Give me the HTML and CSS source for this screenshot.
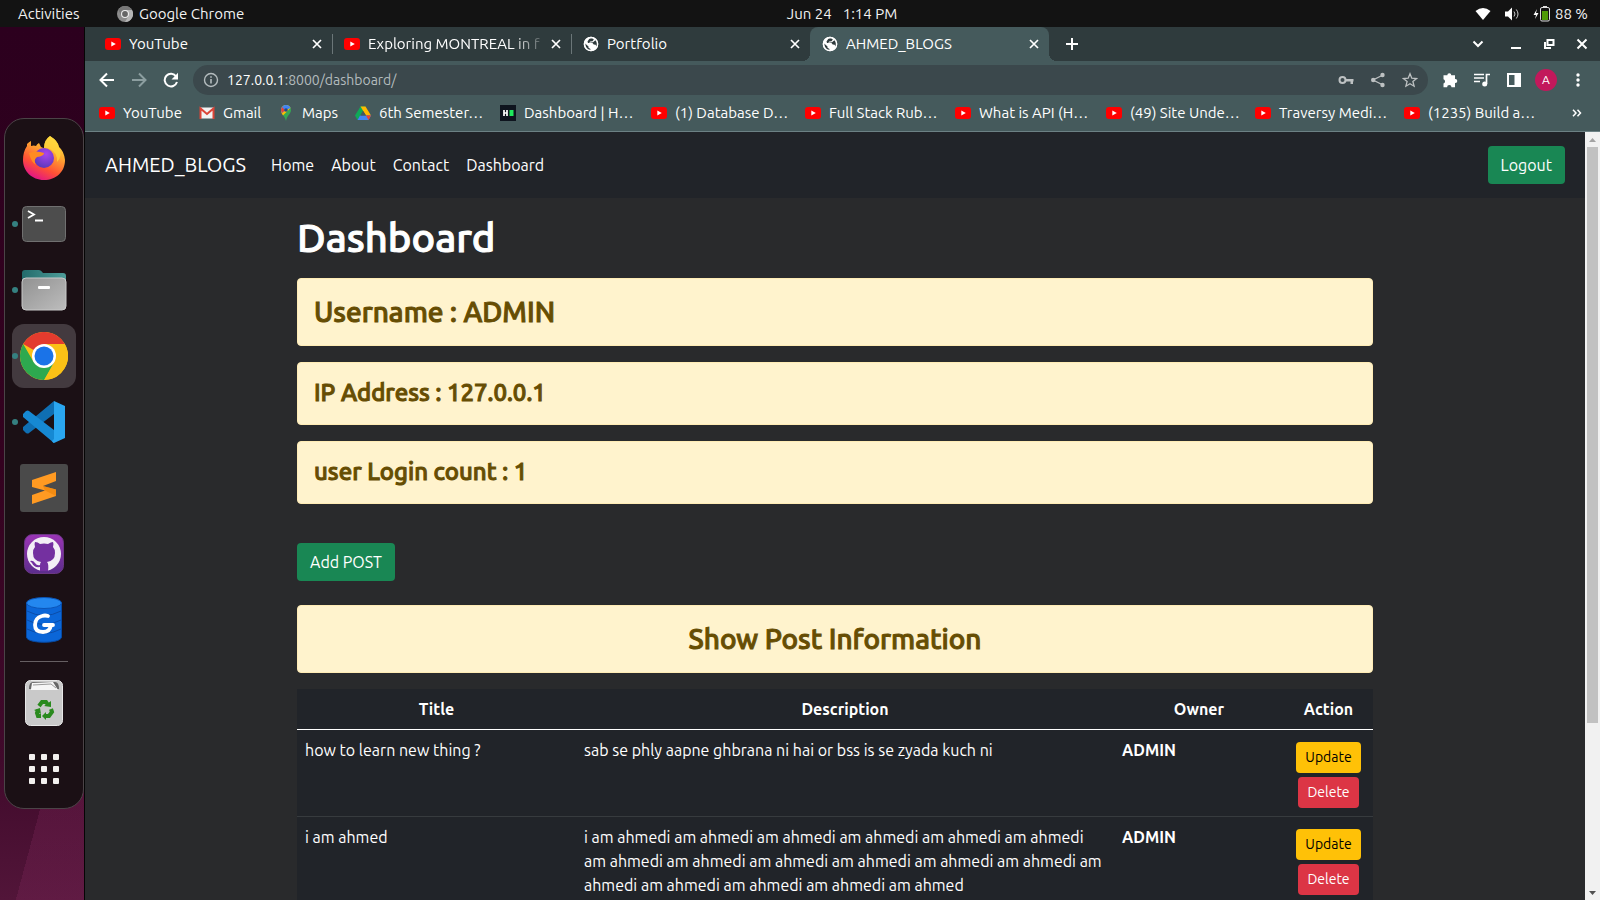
FILE: index.html
```html
<!DOCTYPE html>
<html lang="en">
<head>
<meta charset="utf-8">
<title>AHMED_BLOGS</title>
<link rel="stylesheet" href="styles.css">
</head>
<body>
<svg class="sprite" aria-hidden="true">
  <symbol id="yt" viewBox="0 0 16 16"><rect y="2" width="16" height="12" rx="3" fill="#f00"/><path d="M6.300 5.500v5L10.800 8z" fill="#fff"/></symbol>
  <symbol id="globe" viewBox="0 0 16 16"><circle cx="8" cy="8" r="7.200" fill="#fff"/><path d="M2.200 7.500 5.500 10.500v1.200l2 1.300v1.500A6.500 6.500 0 0 1 2.200 7.500zM6.500 2.500 9.500 2l1.300 1.500-1.300 1.700-2.300.3L6 7h3.500l1.200 1.500 2 .2.800 2.300-1 1.500.8-.8A7 7 0 0 0 13 4L11.500 5 10 6.300 5 7 4.500 5.500z" fill="#2f3b3d"/><circle cx="8" cy="8" r="6.600" fill="none" stroke="#fff" stroke-width="1.500"/></symbol>
  <symbol id="cross" viewBox="0 0 16 16"><path d="m4 4 8 8m0-8-8 8" stroke="#fff" stroke-width="1.700" fill="none"/></symbol>
</svg>

<header class="topbar">
  <button class="top-item activities">Activities</button>
  <div class="top-item app-menu">
    <svg width="16" height="16" viewBox="0 0 16 16"><circle cx="8" cy="8" r="8" fill="#8c8c8c"/><path d="M8 4h7A8 8 0 0 1 8 16l3.500-6z" fill="#b5b5b5"/><path d="M8 0a8 8 0 0 1 7 4H8L4.500 10 1.300 4A8 8 0 0 1 8 0z" fill="#777"/><circle cx="8" cy="8" r="4" fill="#eee"/><circle cx="8" cy="8" r="2.900" fill="#666"/></svg>
    <span>Google Chrome</span>
  </div>
  <div class="clock"><span>Jun 24</span><span>1:14 PM</span></div>
  <div class="status">
    <svg width="16" height="14" viewBox="0 0 16 14"><path d="M.5 4Q8-2 15.500 4L8 13z" fill="#fff"/></svg>
    <svg width="16" height="16" viewBox="0 0 16 16"><path d="M1 5.500h3L8 1.500v13l-4-4H1z" fill="#fff"/><path d="M10 5.500q2 2.500 0 5M12.300 3.500q3.400 4.500 0 9" stroke="#ccc" fill="none"/></svg>
    <svg class="battery" width="17" height="16" viewBox="0 0 17 16"><path d="M4 3 .5 9H3l-1 4 3.500-6H3z" fill="#fff"/><path d="M10 0h4v2h-4z" fill="#ddd"/><rect x="7.500" y="1.500" width="9" height="13.500" rx="1.500" fill="none" stroke="#ddd"/><path d="M9 5h6v9H9z" fill="#4e9a06"/></svg>
    <span>88 %</span>
  </div>
</header>

<div class="desktop">
  <aside class="side">
    <nav class="dock">
      <button class="slot" aria-label="Firefox"><svg width="44" height="46" viewBox="0 0 44 46">
        <defs><linearGradient id="ff1" x1=".8" y1="0" x2=".3" y2="1"><stop offset="0" stop-color="#fff04a"/><stop offset=".35" stop-color="#ffa930"/><stop offset=".7" stop-color="#ff5035"/><stop offset="1" stop-color="#e0118c"/></linearGradient><radialGradient id="ff2" cx=".6" cy=".3" r=".8"><stop offset="0" stop-color="#a945ee"/><stop offset="1" stop-color="#5237b5"/></radialGradient></defs>
        <path d="M28 1q8 5 9 11 5 4 6 13c0 12-9 20-21 20S1 36 1 25c0-5 1-10 4-14v-2q2-2 4-3v5q3-1 5 0 1-2 3-3l2 4q2 1 3 1 0-8 6-12z" fill="url(#ff1)"/>
        <circle cx="22" cy="23" r="10" fill="url(#ff2)"/>
        <path d="M7 18q7-3 15 0 0 3-7 4-4 3-1 8-5-3-7-12z" fill="#ff8b22"/>
        <path d="M28 1q8 5 9 11 4 9-2 15 1-9-7-13-5-2-6-1 0-8 6-12z" fill="#ffd63b" opacity=".75"/></svg></button>
      <button class="slot running" aria-label="Terminal"><svg width="44" height="36" viewBox="0 0 44 36"><rect x=".5" y=".5" width="43" height="35" rx="4" fill="#4d4d4d" stroke="#707070"/><path d="m6 5 6 3.500L6 12M13 14.500h8" stroke="#fff" stroke-width="1.800" fill="none"/></svg></button>
      <button class="slot running" aria-label="Files"><svg width="46" height="42" viewBox="0 0 46 42"><defs><linearGradient id="fg" x2="1" y2="1"><stop stop-color="#919191"/><stop offset="1" stop-color="#bdbdbd"/></linearGradient><linearGradient id="ft" x2="1"><stop stop-color="#236b6b"/><stop offset="1" stop-color="#4e9d99"/></linearGradient></defs><path d="M1 14V4q0-3 3-3h14q2 0 4 3h20q3 0 3 3v9z" fill="url(#ft)"/><rect x="1" y="9" width="44" height="32" rx="4" fill="url(#fg)" stroke="#c9c9c9"/><rect x="17" y="17" width="12" height="3" rx="1" fill="#fff"/></svg></button>
      <button class="slot running focused" aria-label="Google Chrome"><svg width="48" height="48" viewBox="0 0 48 48"><circle cx="24" cy="24" r="24" fill="#fbc116"/><path d="M24 24 3.200 12A24 24 0 0 1 44.800 12z" fill="#e33b2e"/><path d="M3.200 12 13.600 30 24 36l.5 12A24 24 0 0 1 3.200 12z" fill="#2da94f"/><path d="M34.400 30 24.500 48l-7-10L24 36z" fill="#2da94f"/><path d="M34.400 30 24 48a24 24 0 0 0 20.800-36H24z" fill="#fbc116"/><circle cx="24" cy="24" r="12" fill="#fff"/><circle cx="24" cy="24" r="9.500" fill="#1a73e8"/></svg></button>
      <button class="slot running" aria-label="Visual Studio Code"><svg width="42" height="42" viewBox="0 0 42 42"><path d="M31 0v13L6 32q-1 1-3 0l-3-3q-1-1 0-3z" fill="#0f6fb3"/><path d="M31 42V29L6 10q-1-1-3 0l-3 3q-1 1 0 3z" fill="#1689d3"/><path d="m31 0 11 5v32l-11 5q-1 0-2-2l2-2z" fill="#2aa6f0"/></svg></button>
      <button class="slot" aria-label="Sublime Text"><svg width="48" height="48" viewBox="0 0 48 48"><rect width="48" height="48" rx="3" fill="#4a4a4a"/><path d="M12 16 36 8v9l-13 5 13 3.500V32l-24 8v-9l13-4.500L12 23z" fill="#ff9a22"/><path d="m23 22 13 3.500V32l-11-5.500z" fill="#e98208" opacity=".6"/></svg></button>
      <button class="slot" aria-label="GitHub Desktop"><svg width="40" height="40" viewBox="0 0 40 40"><defs><linearGradient id="gh" x2="0" y2="1"><stop stop-color="#9b35b5"/><stop offset="1" stop-color="#5c2d8c"/></linearGradient></defs><rect x=".5" y=".5" width="39" height="39" rx="8" fill="url(#gh)" stroke="#6b3784"/><circle cx="20" cy="20" r="17" fill="#f3eff6"/><path d="M16 37v-4q-6 1-8-4l-2-2q3-1 5 2 2 3 5 2 0-2 1-3-8-1-8-9 0-4 2-6-1-3 0-5 3 0 5 2 4-1 8 0 3-2 5-2 1 2 0 5 2 2 2 6 0 8-8 9 2 2 1 9z" fill="#7430a0"/></svg></button>
      <button class="slot" aria-label="Database client"><svg width="36" height="46" viewBox="0 0 36 46"><path d="M.5 6v34c0 7 35 7 35 0V6z" fill="#0b66d8" stroke="#074aa3"/><path d="M1 14q17 9 34 0M1 23q17 9 34 0M1 32q17 9 34 0" stroke="#0b4da8" fill="none"/><ellipse cx="18" cy="6" rx="17.500" ry="5.500" fill="#2387ef" stroke="#0b55b8"/><path d="M22 19q-3-1-6 0-7 2-7 9 0 7 8 7 7 0 8-7h-7 9" stroke="#fff" stroke-width="3.800" stroke-linecap="round" stroke-linejoin="round" fill="none"/></svg></button>
      <hr class="dock-rule">
      <button class="slot" aria-label="Trash"><svg width="38" height="46" viewBox="0 0 38 46"><rect x=".5" y=".5" width="37" height="45" rx="5" fill="#c9c9c9" stroke="#e8e8e8"/><path d="M4 9q0-7 4-7h22q4 0 4 7z" fill="#666"/><path d="M6 9 7 3l21-1 5 8H6z" fill="#f6f6f6"/><path d="m8 5 18-1 5 4" stroke="#999" fill="none"/><g fill="none" stroke="#2a8a1e" stroke-width="4"><path d="m14 26 3-4h4l2 3"/><path d="m26 29 1 3-3 4h-4"/><path d="M16 36h-3l-1-3 1-3"/></g><path d="m19 26 7 1 0-6zM21 32v8l-4-4zM9 30l6-2 1 6z" fill="#2a8a1e"/></svg></button>
      <button class="slot" aria-label="Show applications"><svg width="30" height="30" viewBox="0 0 30 30" fill="#f2f0ee"><rect width="6" height="6" rx="1"/><rect x="12" width="6" height="6" rx="1"/><rect x="24" width="6" height="6" rx="1"/><rect y="12" width="6" height="6" rx="1"/><rect x="12" y="12" width="6" height="6" rx="1"/><rect x="24" y="12" width="6" height="6" rx="1"/><rect y="24" width="6" height="6" rx="1"/><rect x="12" y="24" width="6" height="6" rx="1"/><rect x="24" y="24" width="6" height="6" rx="1"/></svg></button>
    </nav>
  </aside>

  <div class="window">
    <div class="tabstrip">
      <div class="tab"><svg class="fav"><use href="#yt"/></svg><span class="tab-title">YouTube</span><button class="tab-close" aria-label="Close tab"><svg><use href="#cross"/></svg></button></div>
      <div class="tab divided"><svg class="fav"><use href="#yt"/></svg><span class="tab-title fade">Exploring MONTREAL in f</span><button class="tab-close" aria-label="Close tab"><svg><use href="#cross"/></svg></button></div>
      <div class="tab divided"><svg class="fav"><use href="#globe"/></svg><span class="tab-title">Portfolio</span><button class="tab-close" aria-label="Close tab"><svg><use href="#cross"/></svg></button></div>
      <div class="tab active"><svg class="fav"><use href="#globe"/></svg><span class="tab-title">AHMED_BLOGS</span><button class="tab-close" aria-label="Close tab"><svg><use href="#cross"/></svg></button></div>
      <button class="new-tab" aria-label="New tab"><svg width="12" height="12" viewBox="0 0 12 12"><path d="M6 0v12M0 6h12" stroke="#fff" stroke-width="2"/></svg></button>
      <div class="window-buttons">
        <button class="win-btn wide" aria-label="Search tabs"><svg width="12" height="12" viewBox="0 0 12 12"><path d="m1.500 3.500 4.500 4.500 4.500-4.500" stroke="#fff" stroke-width="2" fill="none"/></svg></button>
        <button class="win-btn" aria-label="Minimize"><svg width="12" height="12" viewBox="0 0 12 12"><path d="M1 10h10" stroke="#fff" stroke-width="2"/></svg></button>
        <button class="win-btn" aria-label="Restore"><svg width="12" height="12" viewBox="0 0 12 12"><path d="M4.500 2h6v5h-6zM2 4v6h6" stroke="#fff" stroke-width="2" fill="none"/></svg></button>
        <button class="win-btn" aria-label="Close"><svg width="12" height="12" viewBox="0 0 12 12"><path d="m1.500 1.500 9 9m0-9-9 9" stroke="#fff" stroke-width="2"/></svg></button>
      </div>
    </div>

    <div class="toolbar">
      <button class="tool" aria-label="Back"><svg viewBox="0 0 16 16"><path d="M15 8H2m6-6.500L1.500 8 8 14.500" stroke="#fff" stroke-width="2" fill="none"/></svg></button>
      <button class="tool" aria-label="Forward"><svg viewBox="0 0 16 16"><path d="M1 8h13M8 1.500 14.500 8 8 14.500" stroke="#8c9ea0" stroke-width="2" fill="none"/></svg></button>
      <button class="tool" aria-label="Reload"><svg viewBox="0 0 16 16"><path d="M13.200 4.500A6.300 6.300 0 1 0 14 10" stroke="#fff" stroke-width="2" fill="none"/><path d="M15 .8v6.700H8.500z" fill="#fff"/></svg></button>
      <div class="address">
        <svg class="info" viewBox="0 0 16 16"><circle cx="8" cy="8" r="6.500" fill="none" stroke="#b4bcbe" stroke-width="1.400"/><path d="M8 7v4.500M8 4.200v1.600" stroke="#b4bcbe" stroke-width="1.600"/></svg>
        <a class="url" href="#"><b>127.0.0.1</b>:8000/dashboard/</a>
        <button class="tool" aria-label="Passwords"><svg viewBox="0 0 16 16"><circle cx="4.500" cy="8" r="3" fill="none" stroke="#bdc1c2" stroke-width="2"/><path d="M7.500 7h8v2.500H15V12h-2.500V9.500h-5z" fill="#bdc1c2"/></svg></button>
        <button class="tool" aria-label="Share"><svg viewBox="0 0 16 16"><path d="M13 3 3 8l10 5" stroke="#bdc1c2" stroke-width="1.300" fill="none"/><g fill="#bdc1c2"><circle cx="12.500" cy="3" r="2.200"/><circle cx="3.200" cy="8" r="2.200"/><circle cx="12.500" cy="13" r="2.200"/></g></svg></button>
        <button class="tool" aria-label="Bookmark"><svg viewBox="0 0 16 16"><path d="m8 1.800 1.800 4.400 4.800.3-3.700 3 1.200 4.700L8 11.700l-4.100 2.500 1.200-4.700-3.700-3 4.800-.3z" stroke="#bdc1c2" stroke-width="1.300" fill="none"/></svg></button>
      </div>
      <button class="tool" aria-label="Extensions"><svg viewBox="0 0 16 16"><path d="M1.500 3.200h3.800a2 2 0 1 1 4 0H13v3.900h.3a2 2 0 1 1 0 4H13v4.200H9.500a2.200 2.200 0 0 0-4.400 0H1.500v-3.800a2.200 2.200 0 0 0 0-4.200z" fill="#fff"/></svg></button>
      <button class="tool" aria-label="Media"><svg viewBox="0 0 16 16"><path d="M0 2.500h10M0 6h10M0 9.500h6M12.500 12V2.500H16" stroke="#fff" stroke-width="1.700" fill="none"/><circle cx="10.700" cy="12" r="2.500" fill="#fff"/></svg></button>
      <button class="tool" aria-label="Side panel"><svg viewBox="0 0 16 16"><path d="M1 1h14v14H1zM3 3v10h5.500V3z" fill="#fff" fill-rule="evenodd"/></svg></button>
      <button class="tool"><span class="avatar">A</span></button>
      <button class="tool" aria-label="Menu"><svg viewBox="0 0 16 16" fill="#fff"><circle cx="8" cy="3" r="1.700"/><circle cx="8" cy="8" r="1.700"/><circle cx="8" cy="13" r="1.700"/></svg></button>
    </div>

    <nav class="bookmarks">
      <a href="#"><svg class="fav"><use href="#yt"/></svg>YouTube</a>
      <a href="#"><svg class="fav" viewBox="0 0 16 16"><path d="M1 2.500h14v11H1z" fill="#f2f2f2"/><path d="M1.500 14V3.500L8 9l6.500-5.500V14" stroke="#db4437" stroke-width="2" fill="none"/></svg>Gmail</a>
      <a href="#"><svg class="fav" viewBox="0 0 16 16"><path d="M8 0a5 5 0 0 1 5 5c0 4-4 5-5 11C7 11 3 9 3 5a5 5 0 0 1 5-5z" fill="#34a853"/><path d="M8 0a5 5 0 0 1 4.600 3L5 10.500Q3 8 3 5a5 5 0 0 1 5-5z" fill="#fbbc04"/><path d="M8 0a5 5 0 0 1 4.600 3L8 5 4 8 3 5a5 5 0 0 1 5-5z" fill="#4285f4"/><path d="m4 2 3 3-3 3-1-3z" fill="#ea4335"/><circle cx="8" cy="5" r="1.800" fill="#234b86"/></svg>Maps</a>
      <a href="#"><svg class="fav" viewBox="0 0 16 16"><path d="M5.500 1.500h5L5 11l-2.500 4L0 10.500z" fill="#0fa958"/><path d="M5.500 1.500h5L16 10.500h-5z" fill="#ffba00"/><path d="M5 10.500h11L13.500 15h-11z" fill="#4285f4"/><path d="m8 6 3 4.500H5.500z" fill="#455a5c"/><path d="M11 10.500h5L13.500 15z" fill="#ea4335"/></svg>6th Semester…</a>
      <a href="#"><svg class="fav" viewBox="0 0 16 16"><path d="M0 0h16v16H0z" fill="#0e141e"/><path d="M4 5v6M7 5v6M4 8h3" stroke="#fff" stroke-width="1.700"/><path d="M9.500 5h4v6h-4z" fill="#1ee85c"/></svg>Dashboard | H…</a>
      <a href="#"><svg class="fav"><use href="#yt"/></svg>(1) Database D…</a>
      <a href="#"><svg class="fav"><use href="#yt"/></svg>Full Stack Rub…</a>
      <a href="#"><svg class="fav"><use href="#yt"/></svg>What is API (H…</a>
      <a href="#"><svg class="fav"><use href="#yt"/></svg>(49) Site Unde…</a>
      <a href="#"><svg class="fav"><use href="#yt"/></svg>Traversy Medi…</a>
      <a href="#"><svg class="fav"><use href="#yt"/></svg>(1235) Build a…</a>
      <button class="more" aria-label="More bookmarks"><svg width="10" height="8" viewBox="0 0 10 8"><path d="m1 .8 3 3.200-3 3.200M5.500.8l3 3.200-3 3.200" stroke="#fff" stroke-width="1.500" fill="none"/></svg></button>
    </nav>

    <div class="viewport">
      <div class="page">
        <nav class="navbar">
          <a class="brand" href="#">AHMED_BLOGS</a>
          <a href="#">Home</a>
          <a href="#">About</a>
          <a href="#">Contact</a>
          <a href="#">Dashboard</a>
          <button class="btn btn-green logout">Logout</button>
        </nav>
        <main class="container">
          <h1>Dashboard</h1>
          <h3 class="alert">Username : ADMIN</h3>
          <h4 class="alert">IP Address : 127.0.0.1</h4>
          <h4 class="alert">user Login count : 1</h4>
          <button class="btn btn-green add">Add POST</button>
          <h3 class="alert centered">Show Post Information</h3>
          <table class="posts">
            <colgroup><col class="c-title"><col><col class="c-owner"><col class="c-action"></colgroup>
            <thead><tr><th>Title</th><th>Description</th><th>Owner</th><th>Action</th></tr></thead>
            <tbody>
              <tr>
                <td>how to learn new thing ?</td>
                <td>sab se phly aapne ghbrana ni hai or bss is se zyada kuch ni</td>
                <td><b>ADMIN</b></td>
                <td><div class="actions"><button class="btn btn-sm btn-yellow">Update</button><button class="btn btn-sm btn-red">Delete</button></div></td>
              </tr>
              <tr>
                <td>i am ahmed</td>
                <td>i am ahmedi am ahmedi am ahmedi am ahmedi am ahmedi am ahmedi am ahmedi am ahmedi am ahmedi am ahmedi am ahmedi am ahmedi am ahmedi am ahmedi am ahmedi am ahmedi am ahmed</td>
                <td><b>ADMIN</b></td>
                <td><div class="actions"><button class="btn btn-sm btn-yellow">Update</button><button class="btn btn-sm btn-red">Delete</button></div></td>
              </tr>
            </tbody>
          </table>
        </main>
      </div>
      <div class="scrollbar" aria-hidden="true">
        <svg width="15" height="15" viewBox="0 0 15 15"><path d="m4 10 3.500-4L11 10z" fill="#a3a3a3"/></svg>
        <div class="track"><div class="thumb"></div></div>
        <svg width="15" height="15" viewBox="0 0 15 15"><path d="m4 6 3.500 4L11 6z" fill="#505050"/></svg>
      </div>
    </div>
  </div>
</div>
</body>
</html>
```
FILE: styles.css
```css
* { box-sizing: border-box; }

body {
  margin: 0;
  height: 100vh;
  display: flex;
  flex-direction: column;
  overflow: hidden;
  background: #131313;
  color: #fff;
  font: 15px/20px Ubuntu, Roboto, "Noto Sans", sans-serif;
}

button {
  font: inherit;
  color: inherit;
  background: none;
  border: 0;
  padding: 0;
}

a { color: inherit; text-decoration: none; }
svg { display: block; flex: none; }
.sprite { position: absolute; width: 0; height: 0; }

/* System bar */
.topbar {
  flex: none;
  height: 27px;
  display: grid;
  grid-template-columns: 99px 1fr auto 1fr;
  align-items: center;
  background: #131313;
  color: #f2f2f2;
}
.top-item { padding-left: 18px; text-align: left; }
.app-menu { display: flex; align-items: center; gap: 6px; }
.clock { display: flex; gap: 11px; margin-right: 15px; }
.status { display: flex; align-items: center; justify-content: flex-end; gap: 13px; padding-right: 12px; margin-left: -99px; }
.battery { margin-right: -8px; }

/* Desktop */
.desktop { flex: 1; min-height: 0; display: flex; }
.side {
  flex: none;
  width: 85px;
  padding: 91px 0 0 4px;
  border-right: 1px solid #050505;
  background:
    linear-gradient(105deg, transparent 54%, rgba(140, 45, 100, .24) 54%) 0 100% / 100% 240px no-repeat,
    linear-gradient(180deg, #2c001e 0, #33021f 50%, #400a2b 84%, #521539 100%);
}
.dock {
  display: flex;
  flex-direction: column;
  gap: 2px;
  padding: 7px;
  border: 1px solid #4b4447;
  border-radius: 20px;
  background: #1b1015;
}
.slot {
  position: relative;
  height: 64px;
  display: flex;
  align-items: center;
  justify-content: center;
  border-radius: 12px;
}
.slot.focused { background: #433a3f; }
.slot.running::before {
  content: "";
  position: absolute;
  left: 0;
  top: 29px;
  width: 6px;
  height: 6px;
  border-radius: 50%;
  background: #358080;
}
.dock-rule { width: 48px; height: 1px; margin: 7px auto; border: 0; background: #665f62; }

/* Browser window */
.window { flex: 1; min-width: 0; display: flex; flex-direction: column; background: #455a5c; }
.tabstrip { flex: none; height: 34px; display: flex; padding-left: 8px; background: #2f3b3d; }
.tab {
  flex: 0 1 239px;
  min-width: 0;
  display: flex;
  align-items: center;
  padding: 0 7px 0 12px;
}
.tab .fav { margin-right: 8px; }
.tab.divided {
  background: linear-gradient(#6b7678, #6b7678) 0 50% / 1px 20px no-repeat;
}
.tab.active { position: relative; border-radius: 8px 8px 0 0; background: #455a5c; }
.tab.active::before,
.tab.active::after {
  content: "";
  position: absolute;
  bottom: 0;
  width: 8px;
  height: 8px;
}
.tab.active::before { left: -8px; background: radial-gradient(circle at 0 0, #2f3b3d 8px, #455a5c 8px); }
.tab.active::after { right: -8px; background: radial-gradient(circle at 100% 0, #2f3b3d 8px, #455a5c 8px); }
.fav { width: 16px; height: 16px; }
.tab-title { flex: 1; min-width: 0; overflow: hidden; white-space: nowrap; }
.fade { -webkit-mask-image: linear-gradient(90deg, #000 80%, transparent); mask-image: linear-gradient(90deg, #000 80%, transparent); }
.tab-close svg { width: 16px; height: 16px; }
.new-tab { width: 28px; display: flex; align-items: center; justify-content: center; margin-left: 9px; }
.window-buttons { margin-left: auto; display: flex; padding-right: 2px; }
.win-btn { width: 33px; display: flex; align-items: center; justify-content: center; }
.win-btn.wide { width: 42px; }

.toolbar { flex: none; height: 38px; display: flex; align-items: center; padding: 0 6px; }
.tool { flex: none; width: 32px; height: 30px; display: flex; align-items: center; justify-content: center; }
.tool svg { width: 16px; height: 16px; }
.address {
  flex: 1;
  height: 30px;
  margin: 0 6px;
  padding: 0 2px 0 10px;
  display: flex;
  align-items: center;
  border-radius: 15px;
  background: #3b484c;
}
.info { width: 16px; height: 16px; }
.url { flex: 1; padding-left: 8px; font-size: 14px; color: #b4bcbe; }
.url b { font-weight: 400; color: #fff; }
.avatar { width: 22px; height: 22px; border-radius: 50%; background: #c2185b; font-size: 12px; line-height: 22px; }

.bookmarks {
  flex: none;
  height: 33px;
  display: grid;
  grid-template-columns: 100px 79px 77px 145px 151px 154px 150px 151px 149px 149px 1fr auto;
  align-items: center;
  padding: 0 18px 4px 14px;
  border-bottom: 1px solid #6c8184;
}
.bookmarks a { display: flex; align-items: center; gap: 8px; white-space: nowrap; }

/* Web page */
.viewport { flex: 1; min-height: 0; display: flex; }
.page { flex: 1; min-width: 0; overflow: hidden; background: #292a2c; font-size: 16px; line-height: 24px; }
.navbar { display: flex; align-items: center; gap: 17px; padding: 14px 20px; background: #212429; }
.brand { font-size: 20px; line-height: 30px; margin-right: 8px; }
.logout { margin-left: auto; }
.container { max-width: 1076px; margin: 0 auto; padding-top: 16px; }
h1, .alert { font-weight: 500; -webkit-text-stroke: 1px; paint-order: stroke fill; }
h1 { margin: 0 0 16px; font-size: 40px; line-height: 48px; }
.alert {
  margin: 0 0 16px;
  padding: 16px;
  border: 1px solid #ffecb5;
  border-radius: 4px;
  background: #fff3cd;
  color: #664d03;
}
h3.alert { font-size: 28px; line-height: 34px; }
h4.alert { padding: 15px 16px 17px; font-size: 24px; line-height: 29px; }
.centered { text-align: center; }

.btn { padding: 7px 13px; border-radius: 4px; font-size: 16px; line-height: 24px; }
.btn-green { background: #198754; }
.add { display: block; margin: 39px 0 24px; }
.btn-sm { padding: 5px 9px; font-size: 14px; line-height: 21px; }
.btn-yellow { background: #ffc107; color: #000; }
.btn-red { background: #dc3545; }

.posts { width: 100%; table-layout: fixed; border-collapse: separate; border-spacing: 0; background: #212429; }
.posts th, .posts td { padding: 8px; vertical-align: top; text-align: left; border-bottom: 1px solid #373b3e; }
.posts th { text-align: center; border-bottom-color: #fff; }
.c-title { width: 279px; }
.c-owner { width: 170px; }
.c-action { width: 89px; }
.actions { display: flex; flex-direction: column; align-items: center; gap: 4px; padding-top: 4px; }

.scrollbar { flex: none; width: 15px; display: flex; flex-direction: column; background: #f1f1f1; }
.track { flex: 1; padding: 0 2px; }
.thumb { height: 78%; background: #c1c1c1; }
```
